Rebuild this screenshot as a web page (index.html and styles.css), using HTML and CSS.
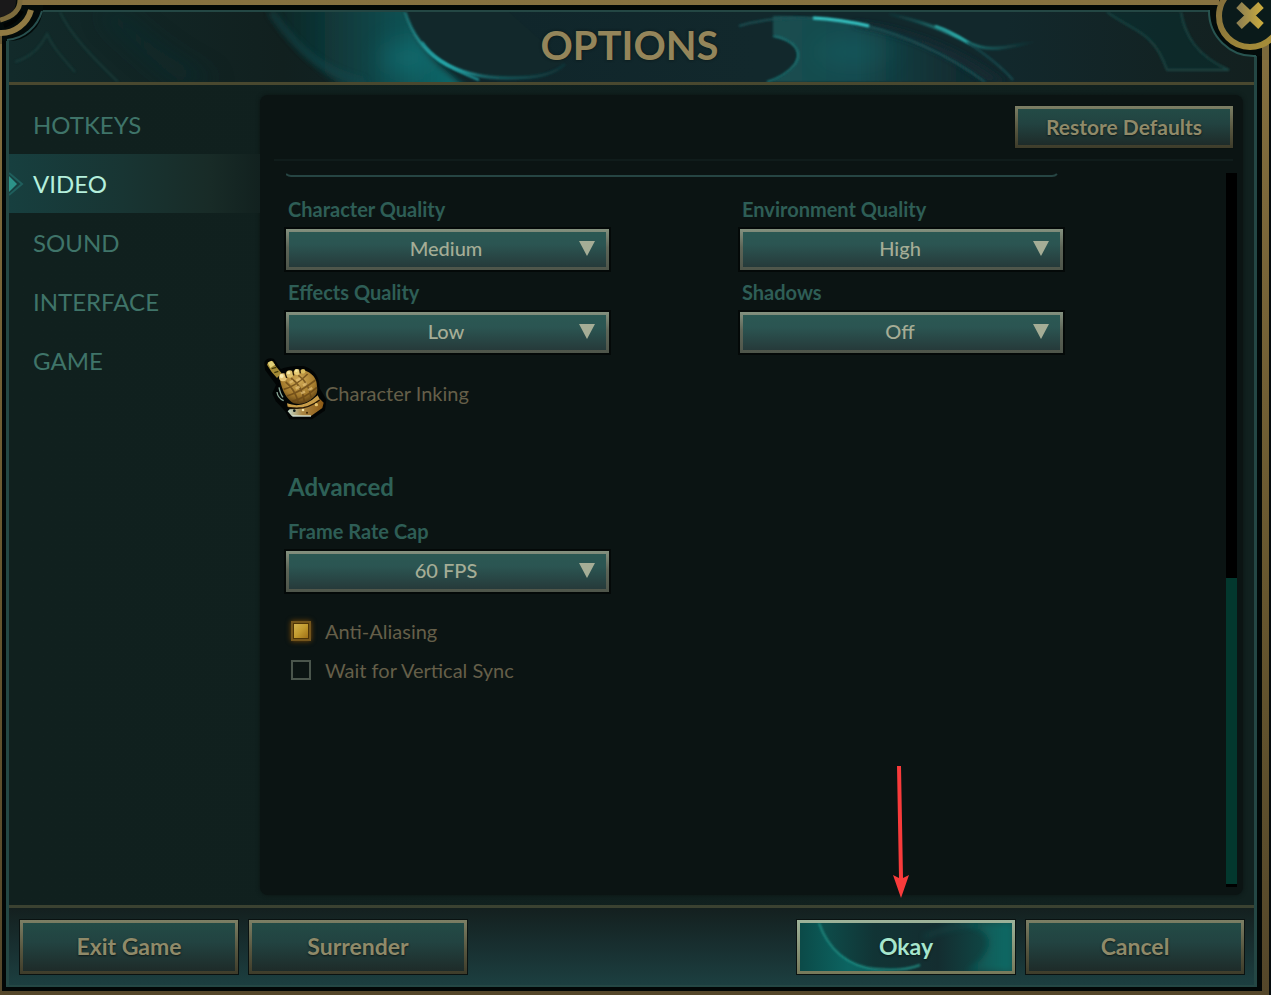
FILE: index.html
```html
<!DOCTYPE html>
<html lang="en">
<head>
<meta charset="utf-8">
<title>Options</title>
<link rel="stylesheet" href="styles.css">
</head>
<body>
<div class="frame">
<div class="frame-gap">
<div class="dialog">

  <header class="titlebar">
    <svg class="titlebar-art" viewBox="0 0 1245 70" preserveAspectRatio="none" aria-hidden="true">
      <defs>
        <filter id="soft" x="-20%" y="-50%" width="140%" height="200%"><feGaussianBlur stdDeviation="1"/></filter>
        <filter id="smooth" x="-20%" y="-50%" width="140%" height="200%"><feGaussianBlur stdDeviation="3"/></filter>
        <filter id="haze" x="-40%" y="-80%" width="180%" height="260%"><feGaussianBlur stdDeviation="12"/></filter>
        <linearGradient id="waveL" x1="0" x2="1"><stop offset="0" stop-color="#0d4a4c" stop-opacity="0"/><stop offset=".55" stop-color="#0e4c4e" stop-opacity=".85"/><stop offset="1" stop-color="#117072"/></linearGradient>
        <linearGradient id="waveR" x1="0" x2="1"><stop offset="0" stop-color="#1c5557"/><stop offset=".4" stop-color="#165054"/><stop offset="1" stop-color="#10383c" stop-opacity=".1"/></linearGradient>
        <linearGradient id="edgeL" x1="0" x2="1"><stop offset="0" stop-color="#1a6b6c"/><stop offset=".25" stop-color="#2fc4c4"/><stop offset=".5" stop-color="#1a6367"/><stop offset="1" stop-color="#14605f" stop-opacity=".2"/></linearGradient>
        <linearGradient id="edgeR" x1="0" x2="1"><stop offset="0" stop-color="#14605f" stop-opacity=".1"/><stop offset=".45" stop-color="#25908f"/><stop offset="1" stop-color="#14605f" stop-opacity="0"/></linearGradient>
      </defs>
      <path d="M250 -8H396C404 24 416 42 436 58L462 80H340C306 56 278 32 250 -8Z" fill="url(#waveL)" filter="url(#smooth)"/>
      <ellipse cx="398" cy="46" rx="26" ry="18" fill="#12868b" opacity=".4" filter="url(#haze)"/>
      <path d="M110 0Q160 50 210 70H170Q130 40 90 0Z" fill="#0d3335" opacity=".5" filter="url(#haze)"/>
      <path d="M396 0C404 24 422 46 446 58C464 66 500 68 530 62L556 50L500 0Z" fill="#12282b"/>
      <path d="M262 0C284 30 306 58 356 70" fill="none" stroke="#17484e" stroke-width="5" opacity=".7" filter="url(#smooth)"/>
      <path d="M396 0C404 26 426 66 500 66C530 66 545 62 556 52" fill="none" stroke="url(#edgeL)" stroke-width="3" filter="url(#soft)"/>
      <path d="M413 30C421 42 434 54 470 68" fill="none" stroke="#209ea2" stroke-width="2" filter="url(#soft)"/>
      <path d="M51 0C61 22 84 46 109 70M6 50C24 44 32 34 38 22C44 36 54 46 66 60" fill="none" stroke="#1c4643" stroke-width="2" opacity=".6" filter="url(#soft)"/>
      <path d="M764 4C840 4 940 24 980 70H760C785 62 796 44 784 32C778 26 766 26 764 22Z" fill="url(#waveR)" opacity=".85" filter="url(#soft)"/>
      <path d="M845 10C920 18 970 50 996 70H976C935 40 900 24 845 14Z" fill="#122c33" filter="url(#smooth)"/>
      <path d="M764 24C786 28 794 40 786 52C780 60 770 66 758 70" fill="none" stroke="#1f7776" stroke-width="2" filter="url(#soft)"/>
      <path d="M730 14C770 2 820 4 858 14C890 22 936 40 976 70" fill="none" stroke="#1c5053" stroke-width="2" filter="url(#soft)"/>
      <path d="M804 6C822 7 838 9 860 14" fill="none" stroke="#38cccb" stroke-width="3" filter="url(#soft)"/>
      <path d="M880 2C915 10 940 20 958 30C980 42 1000 34 1026 30" fill="none" stroke="url(#edgeR)" stroke-width="3" filter="url(#soft)"/>
      <path d="M926 14C936 17 946 22 960 31" fill="none" stroke="#2fb8b5" stroke-width="2" filter="url(#soft)"/>
      <path d="M958 30C976 42 992 54 1004 68" fill="none" stroke="#1a4c51" stroke-width="2" filter="url(#soft)"/>
      <ellipse cx="845" cy="40" rx="40" ry="14" fill="#197a7c" opacity=".25" filter="url(#haze)"/>
      <path d="M1098 0C1125 20 1144 18 1158 58H1220C1188 44 1176 24 1172 0" fill="#103b38" fill-opacity=".3" stroke="#1a4442" stroke-width="2" filter="url(#soft)"/>
    </svg>
    <h1 class="title">OPTIONS</h1>
  </header>

  <main class="body">
    <nav class="tabs" aria-label="Option pages">
      <a class="tab" href="#hotkeys">HOTKEYS</a>
      <a class="tab tab-active" href="#video" aria-current="page">
        <svg class="tab-mark" viewBox="0 0 16 28" aria-hidden="true"><path d="M0 3L13 14L0 25" fill="none" stroke="#1f5e5c" stroke-width="2"/><path d="M0 6L8 14L0 22Z" fill="#2c9288"/></svg>
        VIDEO</a>
      <a class="tab" href="#sound">SOUND</a>
      <a class="tab" href="#interface">INTERFACE</a>
      <a class="tab" href="#game">GAME</a>
    </nav>

    <section class="panel" aria-label="Video options">
      <div class="panel-head">
        <button class="btn btn-small" type="button">Restore Defaults</button>
      </div>
      <div class="panel-scroll">
        <form class="settings">
          <svg class="rule" viewBox="0 0 772 5" preserveAspectRatio="none" aria-hidden="true"><path d="M0 1Q2 3 5 3H766Q769 3 771 1" fill="none" stroke="#264543" stroke-width="2"/></svg>

          <div class="fields">
            <div class="field">
              <label class="label" for="character-quality">Character Quality</label>
              <div class="pick">
                <select class="select" id="character-quality"><option>Medium</option></select>
                <svg class="pick-arrow" viewBox="0 0 16 15" aria-hidden="true"><path d="M0 0H16L8 15Z"/></svg>
              </div>
            </div>
            <div class="field">
              <label class="label" for="environment-quality">Environment Quality</label>
              <div class="pick">
                <select class="select" id="environment-quality"><option>High</option></select>
                <svg class="pick-arrow" viewBox="0 0 16 15" aria-hidden="true"><path d="M0 0H16L8 15Z"/></svg>
              </div>
            </div>
            <div class="field">
              <label class="label" for="effects-quality">Effects Quality</label>
              <div class="pick">
                <select class="select" id="effects-quality"><option>Low</option></select>
                <svg class="pick-arrow" viewBox="0 0 16 15" aria-hidden="true"><path d="M0 0H16L8 15Z"/></svg>
              </div>
            </div>
            <div class="field">
              <label class="label" for="shadows">Shadows</label>
              <div class="pick">
                <select class="select" id="shadows"><option>Off</option></select>
                <svg class="pick-arrow" viewBox="0 0 16 15" aria-hidden="true"><path d="M0 0H16L8 15Z"/></svg>
              </div>
            </div>
          </div>

          <div class="checks checks-pointer">
            <label class="check"><input class="box box-covered" type="checkbox"><span>Character Inking</span></label>
            <svg class="pointer" viewBox="0 0 270 225" aria-hidden="true">
              <defs>
                <radialGradient id="glove" cx=".5" cy=".3" r=".75"><stop offset="0" stop-color="#d2ac58"/><stop offset=".6" stop-color="#a47a2c"/><stop offset="1" stop-color="#4a300b"/></radialGradient>
                <linearGradient id="cuff" x1="0" x2="1"><stop offset="0" stop-color="#c5dcce"/><stop offset=".4" stop-color="#a98542"/><stop offset="1" stop-color="#8d5a14"/></linearGradient>
              </defs>
              <path d="M32 38Q38 26 54 30L76 62Q100 50 145 52Q190 66 190 116L210 150L206 180L170 204H106L94 182L66 152L56 130L68 104L34 58Z" fill="#020505" stroke="#020505" stroke-width="8" stroke-linejoin="round"/>
              <path d="M36 44Q42 30 54 34L62 48L80 70L66 84L50 66Z" fill="#a38a35"/>
              <path d="M38 38L50 32L60 44L46 54Z" fill="#e0d078"/>
              <path d="M50 56L64 52M58 68L70 64" stroke="#443b0c" stroke-width="4"/>
              <path d="M74 84Q110 60 146 60Q184 72 186 108Q190 132 176 142Q150 168 116 160Q84 142 74 84Z" fill="url(#glove)"/>
              <path d="M92 96Q120 118 130 158M108 84Q142 108 148 154M130 76Q162 98 168 142M86 118Q120 110 158 72M96 138Q136 126 182 90M112 154Q150 144 186 112" fill="none" stroke="#664414" stroke-width="5" opacity=".75"/>
              <path d="M104 98L114 92M124 92L136 86M122 116L134 110M144 106L156 100M138 130L150 125M160 120L172 114" stroke="#e4c177" stroke-width="7" opacity=".7"/>
              <circle cx="84" cy="82" r="12" fill="#e4c475"/><circle cx="104" cy="72" r="11" fill="#dcc06a"/><circle cx="126" cy="66" r="9" fill="#e7cd78"/><circle cx="144" cy="64" r="7" fill="#d8bb5c"/>
              <path d="M95 84L90 70M116 76L113 62M136 70L134 58" stroke="#241806" stroke-width="4"/>
              <circle cx="80" cy="78" r="6" fill="#faecae"/><circle cx="101" cy="68" r="5" fill="#f7e8a2"/><circle cx="124" cy="62" r="4" fill="#f5e89c"/>
              <path d="M66 126Q68 144 86 152M72 112Q76 132 84 142" fill="none" stroke="#87a595" stroke-width="4"/>
              <path d="M104 178Q150 176 194 146L206 158L202 174L168 198H110L98 184Z" fill="url(#cuff)"/>
              <path d="M96 160Q144 178 188 136L194 148Q154 182 98 170Z" fill="#c79c48"/>
              <path d="M100 172Q150 184 194 150" fill="none" stroke="#281905" stroke-width="4"/>
              <circle cx="144" cy="180" r="4" fill="#f6e8ae"/><circle cx="184" cy="164" r="5" fill="#e8c66c"/><circle cx="118" cy="182" r="4" fill="#071412"/><circle cx="156" cy="188" r="3" fill="#3c2608"/>
              <path d="M112 198H168" stroke="#dceadd" stroke-width="4"/>
            </svg>
          </div>

          <h2 class="heading">Advanced</h2>
          <div class="fields">
            <div class="field">
              <label class="label" for="frame-cap">Frame Rate Cap</label>
              <div class="pick">
                <select class="select" id="frame-cap"><option>60 FPS</option></select>
                <svg class="pick-arrow" viewBox="0 0 16 15" aria-hidden="true"><path d="M0 0H16L8 15Z"/></svg>
              </div>
            </div>
          </div>
          <div class="checks checks-advanced">
            <label class="check"><input class="box" type="checkbox" checked><span>Anti-Aliasing</span></label>
            <label class="check"><input class="box" type="checkbox"><span>Wait for Vertical Sync</span></label>
          </div>
        </form>
        <div class="scrollbar"><div class="scroll-thumb"></div></div>
      </div>
    </section>
  </main>

  <footer class="footer">
    <button class="btn" type="button">Exit Game</button>
    <button class="btn" type="button">Surrender</button>
    <div class="confirm">
      <button class="btn btn-primary" type="button">
        <svg class="btn-art" viewBox="0 0 212 48" preserveAspectRatio="none" aria-hidden="true">
          <defs>
            <linearGradient id="okL" x1="0" x2="1"><stop offset="0" stop-color="#0b4a48"/><stop offset=".5" stop-color="#0c6461"/><stop offset="1" stop-color="#0f5654"/></linearGradient>
            <linearGradient id="okR" x1="0" x2="1"><stop offset="0" stop-color="#0c6460" stop-opacity="0"/><stop offset="1" stop-color="#0d6a65"/></linearGradient>
          </defs>
          <path d="M0 0H19C26 20 44 48 96 48H0Z" fill="url(#okL)"/>
          <path d="M19 0C28 26 48 44 76 46C96 48 110 46 120 42" fill="none" stroke="#1f8a80" stroke-width="2" filter="url(#soft)"/>
          <path d="M140 0C200 0 200 26 166 48H212V0Z" fill="url(#okR)" filter="url(#smooth)"/>
          <path d="M124 14Q150 2 176 2" fill="none" stroke="#176963" stroke-width="3" opacity=".4" filter="url(#smooth)"/>
        </svg>
        <span class="btn-text">Okay</span>
      </button>
      <svg class="callout" viewBox="0 0 18 132" aria-hidden="true"><path d="M5 0H9L11 112L17 109L9 132L1 109L7 112Z" fill="#f93b3b"/></svg>
    </div>
    <button class="btn" type="button">Cancel</button>
  </footer>

</div>
</div>
</div>

<svg class="corner" viewBox="0 0 44 44" aria-hidden="true">
  <path d="M0 0H43V9A34 34 0 0 1 8 41H0Z" fill="#030b0a"/>
  <path d="M43 2.5H18" stroke="#877140" stroke-width="5"/>
  <path d="M1 30V44" stroke="#6d5c35" stroke-width="2"/>
  <path d="M42 11A40 40 0 0 1 7 40" fill="none" stroke="#28504f" stroke-width="2"/>
  <path d="M31 10A31 31 0 0 1 0 33" fill="none" stroke="#907a43" stroke-width="6"/>
  <path d="M0 0H16Q16 16 0 17Z" fill="#1a191a"/>
  <path d="M20 0Q20 15 0 20" fill="none" stroke="#7d6b3c" stroke-width="5"/>
  <path d="M22 11Q16 22 4 26" fill="none" stroke="#010403" stroke-width="4"/>
</svg>

<button class="close" type="button" aria-label="Close">
  <svg class="close-art" viewBox="0 0 64 60" aria-hidden="true">
    <defs>
      <linearGradient id="ring" x1="0" x2="1" y1="0" y2="1"><stop offset="0" stop-color="#7d6a3c"/><stop offset="1" stop-color="#ac9238"/></linearGradient>
      <linearGradient id="cross" x1="0" x2="1"><stop offset="0" stop-color="#8f8151"/><stop offset="1" stop-color="#c8a93e"/></linearGradient>
    </defs>
    <path d="M3 0H64V50H62V60H55V56H50A44 44 0 0 1 3 10Z" fill="#030b0a"/>
    <path d="M0 2.5H12" stroke="#877140" stroke-width="5"/>
    <path d="M2 10A45 45 0 0 0 49 56" fill="none" stroke="#285450" stroke-width="2"/>
    <path d="M58.500 44V60" stroke="#7a683b" stroke-width="7"/>
    <circle cx="43" cy="16" r="31" fill="#0a1a1a" stroke="url(#ring)" stroke-width="6"/>
    <path d="M32 5L54 26M54 5L32 26" stroke="url(#cross)" stroke-width="8"/>
  </svg>
</button>
</body>
</html>
```
FILE: styles.css
```css
* { box-sizing: border-box; }

body {
  margin: 0;
  min-height: 100vh;
  display: flex;
  position: relative;
  overflow: hidden;
  padding-right: 2px;
  background: #050a0c;
  font-family: Lato, "Open Sans", sans-serif;
}

/* Gold outer frame, black gap, teal-edged dialog */
.frame {
  flex: 1;
  display: flex;
  padding: 5px 7px 4px 2px;
  background: linear-gradient(#877140, #66562e 60%, #54472a);
}

.frame-gap {
  flex: 1;
  display: flex;
  padding: 5px 5px 4px 4px;
  background: #020706;
}

.dialog {
  flex: 1;
  display: flex;
  flex-direction: column;
  min-width: 0;
  border: solid #244744;
  border-width: 2px 3px;
  background: #10201e;
}

.titlebar {
  position: relative;
  display: flex;
  align-items: center;
  justify-content: center;
  height: 73px;
  padding: 0 4px 4px 0;
  border-bottom: 3px solid #49482f;
  background: linear-gradient(90deg, #122a2a, #11201f 22%, #10262b 40%, #12282c 60%, #12282c 80%, #13201f);
}

.titlebar-art {
  position: absolute;
  inset: 0;
  width: 100%;
  height: 100%;
}

.title {
  position: relative;
  margin: 0;
  color: #94855a;
  font-size: 40px;
  font-weight: 700;
  line-height: 48px;
  text-shadow: 0 0 3px #0a1414;
}

.body {
  flex: 1;
  display: flex;
  padding: 10px 11px 10px 0;
  background: linear-gradient(90deg, #10201e, #11211f);
}

.tabs {
  flex: 0 0 251px;
  display: flex;
  flex-direction: column;
}

.tab {
  position: relative;
  display: flex;
  align-items: center;
  height: 59px;
  padding: 0 24px;
  color: #3f7469;
  font-size: 24px;
  line-height: 30px;
  text-decoration: none;
}

.tab-active {
  background: linear-gradient(90deg, #173f3f, #183533 45%, #182b27 80%, #12211f);
  color: #b5efdc;
}

.tab-mark {
  position: absolute;
  left: 0;
  top: 16px;
  width: 16px;
  height: 28px;
}

.panel {
  flex: 1;
  display: flex;
  flex-direction: column;
  min-width: 0;
  border-radius: 8px;
  background: #0b1413;
  box-shadow: 0 0 4px #0b1413;
}

.panel-head {
  display: flex;
  justify-content: flex-end;
  margin: 0 10px 0 14px;
  padding: 11px 0;
  border-bottom: 2px solid #101c1b;
}

.panel-scroll {
  flex: 1;
  display: flex;
  justify-content: space-between;
  padding: 12px 6px 8px 26px;
}

.settings {
  flex: 0 1 778px;
  min-width: 0;
}

.rule {
  display: block;
  width: 772px;
  max-width: 100%;
  height: 5px;
  margin-bottom: 17px;
}

.fields {
  display: grid;
  grid-template-columns: repeat(2, minmax(0, 323px));
  column-gap: 131px;
}

.field { height: 83px; }

.label {
  display: block;
  height: 34px;
  padding: 0 2px;
  color: #2e5e56;
  font-size: 20px;
  font-weight: 700;
  line-height: 28px;
}

.pick { position: relative; }

.select {
  display: block;
  width: 100%;
  height: 41px;
  margin: 0;
  padding: 0 3px 3px 0;
  border: 3px solid;
  border-image: linear-gradient(#84917f, #5d6557 45%, #4e554a) 3;
  border-radius: 0;
  outline: 2px solid #040908;
  appearance: none;
  background: linear-gradient(#2b5853, #2b5552 35%, #263a3a);
  color: #a5ad96;
  font: 500 20px/28px Lato, "Open Sans", sans-serif;
  text-align: center;
  text-align-last: center;
}

.pick-arrow {
  position: absolute;
  right: 14px;
  top: 12px;
  width: 16px;
  height: 15px;
  fill: #a5ad96;
  pointer-events: none;
}

.checks {
  position: relative;
  display: grid;
  row-gap: 11px;
  justify-items: start;
}

.checks-pointer {
  margin-top: 18px;
  margin-bottom: 64px;
}

.checks-advanced { margin-top: 17px; }

.check {
  display: flex;
  align-items: center;
  gap: 14px;
  height: 28px;
  padding-left: 5px;
  color: #655f49;
  font-size: 20px;
  line-height: 28px;
}

.box {
  appearance: none;
  width: 20px;
  height: 20px;
  margin: 0;
  border: 2px solid #4a554c;
  background: #0b1413;
}

.box:checked {
  border-color: #75561c;
  background: linear-gradient(135deg, #d6b654, #c29a2e 50%, #996a13);
  box-shadow: 0 0 5px #7a4a06, inset 0 0 0 1px #4e3407;
}

.box-covered { border-color: #0b1413; }

.pointer {
  position: absolute;
  left: -31px;
  top: -29px;
  width: 90px;
  height: 75px;
  pointer-events: none;
}

.heading {
  margin: 0 0 14px;
  padding-left: 2px;
  color: #2e6157;
  font-size: 24px;
  font-weight: 700;
  line-height: 32px;
}

.scrollbar {
  display: flex;
  flex-direction: column;
  justify-content: flex-end;
  width: 11px;
  padding-bottom: 3px;
  background: #000;
}

.scroll-thumb {
  height: 43%;
  background: #03382e;
}

.footer {
  display: flex;
  gap: 11px;
  padding: 12px 10px 11px 11px;
  border-top: 3px solid #3b4231;
  background: linear-gradient(#14201f, #182f30 50%, #1c3f40);
}

.btn {
  flex: 0 1 218px;
  height: 54px;
  padding: 0 0 3px;
  border: 3px solid;
  border-image: linear-gradient(#7c7f65, #57563f 55%, #3e3c2a) 3;
  border-radius: 0;
  outline: 1px solid #0a1211;
  background: linear-gradient(#234b46, #224341 40%, #1e2b29);
  color: #8f8a69;
  font: 700 23px/30px Lato, "Open Sans", sans-serif;
  text-shadow: 0 1px 2px #0d1817;
}

.btn-small {
  height: 42px;
  padding: 0;
  font-size: 21px;
}

.confirm {
  position: relative;
  flex: 0 1 218px;
  display: flex;
  margin-left: auto;
}

.btn-primary {
  position: relative;
  flex: 1;
  border-image: linear-gradient(#9db39a, #76795a) 3;
  background: linear-gradient(90deg, #0c5754, #113435 35%, #142d30 65%, #0c5450);
  color: #a6e6cd;
}

.btn-art {
  position: absolute;
  inset: 0;
  width: 100%;
  height: 100%;
}

.btn-text { position: relative; }

.callout {
  position: absolute;
  left: 95px;
  bottom: calc(100% + 22px);
  width: 18px;
  height: 132px;
  pointer-events: none;
}

.corner {
  position: absolute;
  left: 0;
  top: 0;
  width: 44px;
  height: 44px;
}

.close {
  position: absolute;
  right: 0;
  top: 0;
  width: 64px;
  height: 60px;
  padding: 0;
  border: 0;
  background: none;
}

.close-art {
  display: block;
  width: 64px;
  height: 60px;
}
```
